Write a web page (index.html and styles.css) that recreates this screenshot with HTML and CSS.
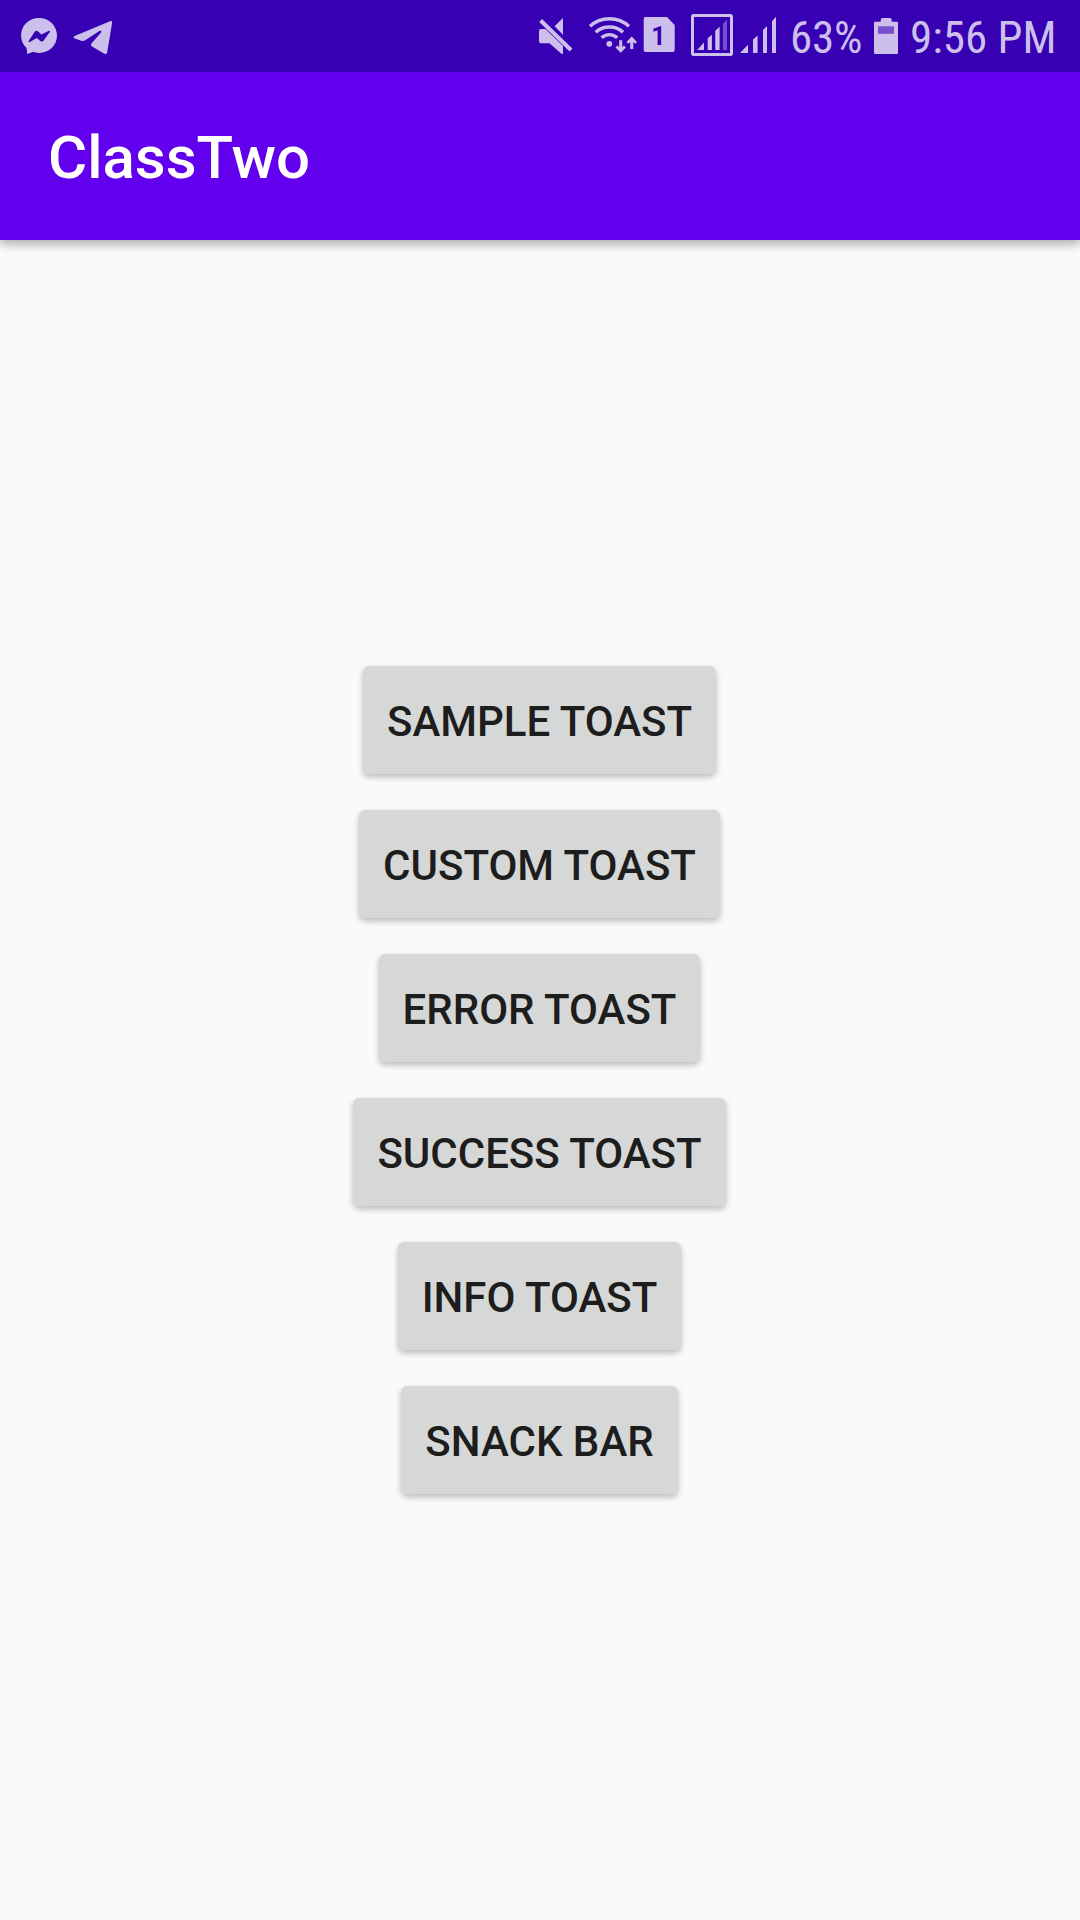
FILE: index.html
```html
<!DOCTYPE html>
<html lang="en">
<head>
<meta charset="utf-8">
<title>ClassTwo</title>
<link rel="stylesheet" href="styles.css">
</head>
<body>
<div class="screen">
  <div class="status-bar">
    <div class="notifications">
      <svg class="icon" width="38" height="72" viewBox="20 0 38 72"><path d="M39 17.9c-10 0-17.9 7.500-17.900 17.600 0 5 2 9.300 5.500 12.600l.7 5.900 5.800-2.200c1.900.8 3.800 1.100 5.900 1.100 10.200 0 18-7.500 18-17.400S49.200 17.900 39 17.900z"/><path class="cutout" d="M28.500 41.300l6.200-9.500c1-1.300 2.200-1.300 3.400-.4l3.400 3 7.300-3.600c.9-.3 1.500.4 1 1.200l-6.100 8.500c-.9 1.200-2.100 1.200-3.300.4l-3.600-3-7 4.200c-.9.4-1.600-.1-1.300-.8z"/></svg>
      <svg class="icon" width="42" height="72" viewBox="72 0 42 72"><path d="M74.600 35.900L110 21.300c1.600-.6 2.400.1 2.100 1.700l-4.900 29.200c-.4 1.900-1.700 2.300-3.200 1.400l-12-7.200c-1.200-.7-1.200-2-.4-3.100l9.500-10.700c1-1.300-.3-2.300-1.700-1.500L85.200 40.300c-1.300.9-2.500 1-3.900.5l-6.600-2.300c-1.400-.6-1.400-1.900-.1-2.600z"/></svg>
    </div>
    <div class="indicators">
      <svg class="icon mute" width="35" height="72" viewBox="538 0 35 72"><path d="M539 31q0-2 2-2h4.500L563 46v8l-2-.6-11.500-10.200H541q-2 0-2-2zM554.500 26.300L563 18v16.700z"/><path class="line thick" d="M540.600 20.500L571 50"/></svg>
      <svg class="icon wifi" width="51" height="72" viewBox="587 0 51 72"><g class="line"><path d="M590 26.300Q598 18.700 609.400 18.700T629 26.300M595.700 32.300Q601 27 609.400 27T623 32.300M601.600 37.800Q605 34.600 609.400 34.600T617.200 37.800"/></g><circle cx="609.300" cy="43.800" r="2.900"/><path d="M619.200 40.300h3v7l1.800-1.800 1.900 1.900-5.200 5.300-5.200-5.300 1.900-1.900 1.800 1.800zM630.200 49h3.100v-7l1.800 1.800 1.900-1.900-5.300-5.300-5.200 5.300 1.900 1.900 1.800-1.800z"/></svg>
      <svg class="icon sim" width="32" height="72" viewBox="643 0 32 72"><path d="M645.700 17H667l7.700 8v25q0 2-2 2h-27q-2 0-2-2V19q0-2 2-2z"/><text class="sim-number" x="658.500" y="45">1</text></svg>
      <svg class="icon boxed" width="42" height="72" viewBox="691 0 42 72"><rect class="frame" x="692.500" y="15.500" width="39" height="39" rx="1"/><path d="M697.300 50l6.700-7.600V50zM707.700 50V38.200l4.200-3.400V50zM715.300 50V30.700l4.300-4V50z"/><path class="dim" d="M723 50V23.500l4-3.800V50z"/></svg>
      <svg class="icon signal" width="37" height="72" viewBox="740 0 37 72"><path d="M740 53l8-8.300V53zM753 53V39.500l4.600-4V53zM763 53V30l4-4v27zM772 53V21.300l4-4.500V53z"/></svg>
      <span class="status-text percent">63%</span>
      <svg class="icon battery" width="24" height="72" viewBox="874 0 24 72"><path d="M875 21.700h5.700V20q0-2 2-2h7q2 0 2 2v1.700h5.300q1 0 1 1V53q0 1-1 1h-22q-1 0-1-1V22.700q0-1 1-1z"/><path class="battery-empty" d="M878 26.300h16v7.500h-16z"/></svg>
      <span class="status-text clock">9:56 PM</span>
    </div>
  </div>
  <header class="app-bar"><h1 class="title">ClassTwo</h1></header>
  <main class="content">
    <button class="button">SAMPLE TOAST</button>
    <button class="button">CUSTOM TOAST</button>
    <button class="button">ERROR TOAST</button>
    <button class="button">SUCCESS TOAST</button>
    <button class="button">INFO TOAST</button>
    <button class="button">SNACK BAR</button>
  </main>
</div>
</body>
</html>
```
FILE: styles.css
```css
body {
  margin: 0;
  font-family: Roboto, "Liberation Sans", sans-serif;
}

.screen {
  display: flex;
  flex-direction: column;
  width: 1080px;
  height: 1920px;
  overflow: hidden;
  background: #fafafa;
}

.status-bar {
  position: relative;
  z-index: 1;
  display: flex;
  justify-content: space-between;
  height: 72px;
  padding: 0 26px 0 20px;
  background: #3700b3;
}

.notifications {
  display: flex;
  gap: 14px;
}

.indicators {
  display: flex;
}

.icon {
  display: block;
  flex: none;
  fill: #cdbfec;
}

.cutout {
  fill: #3700b3;
}

.line {
  fill: none;
  stroke: #cdbfec;
  stroke-width: 3.4;
}

.thick {
  stroke-width: 4;
}

.frame {
  fill: none;
  stroke: #cdbfec;
  stroke-width: 3;
}

.dim,
.battery-empty {
  fill: #784fca;
}

.sim-number {
  fill: #3700b3;
  font-size: 25px;
  font-weight: 700;
  text-anchor: middle;
}

.mute { margin-right: 14px; }
.wifi { margin-right: 5px; }
.sim { margin-right: 16px; }
.boxed { margin-right: 7px; }
.signal { margin-right: 13px; }

.status-text {
  color: #cdbfec;
  font-family: "Roboto Condensed", Roboto, sans-serif;
  font-size: 45px;
  font-stretch: 75%;
  line-height: 75px;
  white-space: nowrap;
}

.percent {
  width: 84px;
  letter-spacing: -0.2px;
}

.clock {
  width: 144px;
  margin-left: 12px;
}

.app-bar {
  position: relative;
  display: flex;
  align-items: center;
  flex: none;
  height: 168px;
  padding: 4px 48px 0;
  box-sizing: border-box;
  background: #6200ee;
  box-shadow: 0 4px 10px rgba(0, 0, 0, 0.32);
}

.title {
  margin: 0;
  color: #fff;
  font-size: 60px;
  font-weight: 500;
  line-height: 70px;
}

.content {
  display: flex;
  flex: 1;
  flex-direction: column;
  align-items: center;
  justify-content: center;
  gap: 36px;
  padding-right: 1px;
}

.button {
  height: 108px;
  padding: 3px 24px 0;
  border: 0;
  border-radius: 6px;
  background: #d6d8d7;
  box-shadow: 0 3px 6px rgba(0, 0, 0, 0.26);
  color: #1d1d1d;
  font: 500 42px/49px Roboto, "Liberation Sans", sans-serif;
}
```
